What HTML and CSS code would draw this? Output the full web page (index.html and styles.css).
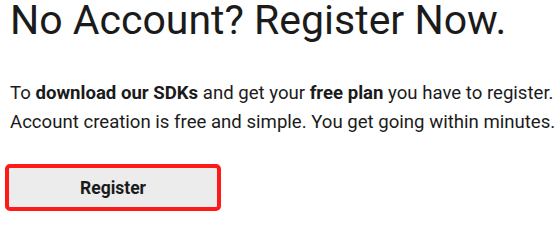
FILE: index.html
```html
<!DOCTYPE html>
<html lang="en">
<head>
<meta charset="utf-8">
<link rel="stylesheet" href="styles.css">
</head>
<body>
<main class="page">
  <h1 class="title">No Account? Register Now.</h1>
  <p class="intro">To <strong>download our SDKs</strong> and get your <strong>free plan</strong> you have to register. Account creation is free and simple. You get going within minutes.</p>
  <button class="register" type="button">Register</button>
</main>
</body>
</html>
```
FILE: styles.css
```css
html, body {
  margin: 0;
  padding: 0;
  background: #ffffff;
}
body {
  font-family: Roboto, "Liberation Sans", sans-serif;
  color: #1b1b1b;
  overflow: hidden;
}
.page {
  padding-left: 10px;
  width: 560px;
  display: flex;
  flex-direction: column;
  align-items: flex-start;
}
.title {
  margin: -4px 0 0 0;
  font-size: 41px;
  font-weight: 400;
  line-height: 48px;
  white-space: nowrap;
}
.intro {
  margin: 35px 0 0 0;
  font-size: 18.6px;
  line-height: 29px;
  width: 560px;
}
.intro strong {
  font-weight: 700;
}
.register {
  margin: 27px 0 0 -5px;
  width: 216px;
  height: 47px;
  box-sizing: border-box;
  border: 4px solid #ff1a1a;
  border-radius: 5px;
  background: #ececec;
  font-family: Roboto, "Liberation Sans", sans-serif;
  font-size: 17.5px;
  font-weight: 700;
  color: #1b1b1b;
  padding: 0;
}
```
